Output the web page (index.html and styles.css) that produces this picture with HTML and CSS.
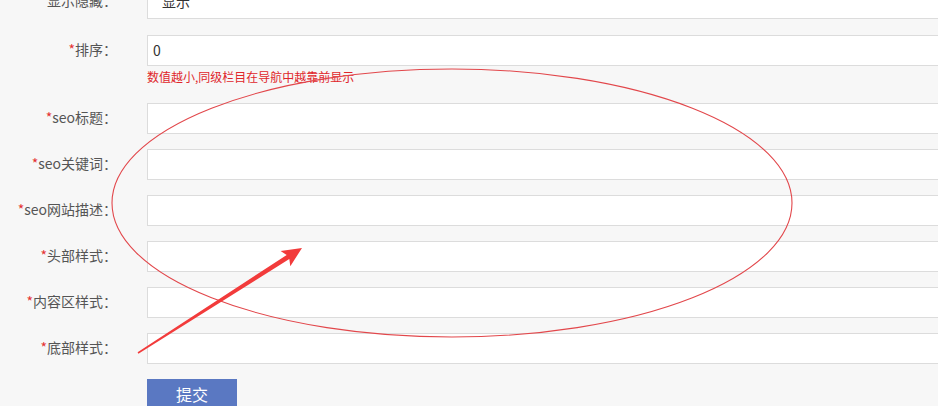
FILE: index.html
```html
<!DOCTYPE html>
<html lang="zh-CN">
<head>
<meta charset="utf-8">
<title>栏目设置</title>
<link rel="stylesheet" href="styles.css">
</head>
<body>
<div class="page">
  <form class="form">
    <div class="row row-first">
      <label class="label"><span class="req">*</span>显示隐藏：</label>
      <div class="field"><div class="select">显示</div></div>
    </div>
    <div class="row">
      <label class="label"><span class="req">*</span>排序：</label>
      <div class="field">
        <div class="input">0</div>
        <div class="hint">数值越小,同级栏目在导航中越靠前显示</div>
      </div>
    </div>
    <div class="row">
      <label class="label"><span class="req">*</span>seo标题：</label>
      <div class="field"><div class="input"></div></div>
    </div>
    <div class="row">
      <label class="label"><span class="req">*</span>seo关键词：</label>
      <div class="field"><div class="input"></div></div>
    </div>
    <div class="row">
      <label class="label"><span class="req">*</span>seo网站描述：</label>
      <div class="field"><div class="input"></div></div>
    </div>
    <div class="row">
      <label class="label"><span class="req">*</span>头部样式：</label>
      <div class="field"><div class="input"></div></div>
    </div>
    <div class="row">
      <label class="label"><span class="req">*</span>内容区样式：</label>
      <div class="field"><div class="input"></div></div>
    </div>
    <div class="row">
      <label class="label"><span class="req">*</span>底部样式：</label>
      <div class="field"><div class="input"></div></div>
    </div>
    <div class="row">
      <div class="label"></div>
      <div class="field"><button type="button" class="btn">提交</button></div>
    </div>
  </form>
  <svg class="annot" width="938" height="406" viewBox="0 0 938 406">
    <ellipse cx="452" cy="203" rx="340" ry="134" fill="none" stroke="#e2474b" stroke-width="1.1"/>
    <polygon fill="#f23b3b" points="137.6,352.3 286.7,254.9 280.6,251 302,248 290.3,266.2 289.3,259.1 138.4,353.7"/>
  </svg>
</div>
</body>
</html>
```
FILE: styles.css
```css
html, body {
  margin: 0;
  padding: 0;
  overflow: hidden;
  background: #f7f7f7;
}
body {
  width: 938px;
  height: 406px;
  font-family: "Noto Sans CJK SC", "Microsoft YaHei", sans-serif;
  font-size: 14px;
  color: #555;
}
.page {
  position: relative;
  width: 938px;
  height: 406px;
  overflow: hidden;
}
.form {
  margin-top: -12px;
  display: flex;
  flex-direction: column;
}
.row {
  display: flex;
  align-items: flex-start;
  margin-bottom: 15px;
}
.row-first {
  margin-bottom: 16px;
}
.label {
  width: 117px;
  flex: none;
  margin-right: 30px;
  text-align: right;
  line-height: 28px;
  height: 31px;
  white-space: nowrap;
  color: #555;
}
.row-first .label {
  line-height: 24px;
}
.req {
  color: #e53333;
}
.field {
  width: 820px;
  flex: none;
}
.input, .select {
  box-sizing: border-box;
  height: 31px;
  border: 1px solid #dcdcdc;
  background: #fff;
  line-height: 29px;
  padding-left: 5px;
  color: #333;
}
.select {
  padding-left: 14px;
  line-height: 24px;
}
.hint {
  font-size: 12px;
  line-height: 22px;
  height: 22px;
  color: #e0262b;
}
.btn {
  width: 90px;
  height: 31px;
  border: none;
  background: #5a78c2;
  color: #fff;
  font-family: inherit;
  font-size: 16px;
  line-height: 31px;
  padding: 0;
  cursor: pointer;
}
.annot {
  position: absolute;
  left: 0;
  top: 0;
  pointer-events: none;
}
```
